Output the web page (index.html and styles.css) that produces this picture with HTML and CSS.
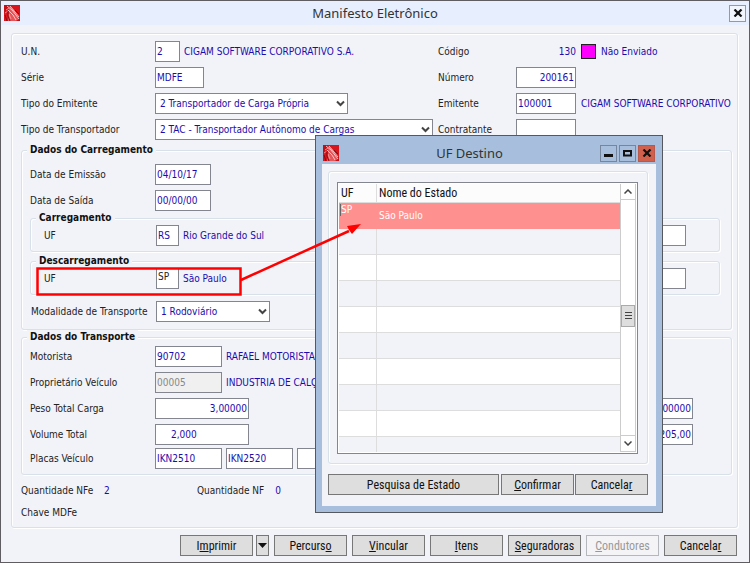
FILE: index.html
```html
<!DOCTYPE html>
<html lang="pt-BR">
<head>
    <meta charset="UTF-8" />
    <meta name="viewport" content="width=device-width, initial-scale=1" />
    <title>Manifesto Eletrônico</title>
    <link rel="stylesheet" href="styles.css">
</head>
<body>

    <svg class="sprite" aria-hidden="true">
        <symbol id="logo" viewBox="0 0 16 16">
            <rect width="16" height="16" fill="#d8141c" />
            <path d="M0 9L5 0H0zM16 11V16H12z" fill="#c01016" />
            <path d="M4 16L5 5L6 1L10 5L15 14L12 16z" fill="#e65458" />
            <path d="M3 1L8 5L15 14M6 1L11 7L15 12M4 5L9 10L12 15" stroke="#fbd0d0" stroke-width=".9" fill="none" />
            <path d="M2 5L5 3M1 8L4 6M5 9L7 14" stroke="#f4a8a8" stroke-width=".8" fill="none" />
            <path d="M4 6L4 11L6 16M1 10L3 16M11 5L15 9" stroke="#8e080e" stroke-width="1" fill="none" />
        </symbol>
        <symbol id="seta" viewBox="0 0 9 7">
            <path d="M1 1.5L4.5 5L8 1.5" stroke="#444" stroke-width="2" fill="none" />
        </symbol>
        <symbol id="fechar" viewBox="0 0 10 8">
            <path d="M1.5 .5L8.5 7.5M8.5 .5L1.5 7.5" stroke="#111" stroke-width="2.2" fill="none" />
        </symbol>
    </svg>

    <main class="janela">
        <header class="titulo">
            <svg class="logo"><use href="#logo" /></svg>
            <h1>Manifesto Eletrônico</h1>
            <button type="button" class="btn-janela" aria-label="Fechar"><svg width="10" height="8"><use href="#fechar" /></svg></button>
        </header>

        <form class="conteudo">
            <div class="painel">
                <div class="linhas">
                    <div class="linha dupla">
                        <label for="un">U.N.</label>
                        <div class="campo"><input id="un" class="w25" value="2"><span>CIGAM SOFTWARE CORPORATIVO S.A.</span></div>
                        <label for="codigo">Código</label>
                        <div class="campo"><output id="codigo" class="codigo">130</output><i class="status"></i><span>Não Enviado</span></div>
                    </div>
                    <div class="linha dupla">
                        <label for="serie">Série</label>
                        <div class="campo"><input id="serie" class="w49" value="MDFE"></div>
                        <label for="numero">Número</label>
                        <div class="campo"><input id="numero" class="w60 direita" value="200161"></div>
                    </div>
                    <div class="linha dupla">
                        <label for="tipo-emitente">Tipo do Emitente</label>
                        <div class="campo">
                            <span class="combo w193">
                                <select id="tipo-emitente"><option>2 Transportador de Carga Própria</option></select>
                                <svg><use href="#seta" /></svg>
                            </span>
                        </div>
                        <label for="emitente">Emitente</label>
                        <div class="campo"><input id="emitente" class="w60" value="100001"><span>CIGAM SOFTWARE CORPORATIVO</span></div>
                    </div>
                    <div class="linha dupla">
                        <label for="tipo-transportador">Tipo de Transportador</label>
                        <div class="campo">
                            <span class="combo w278">
                                <select id="tipo-transportador"><option>2 TAC - Transportador Autônomo de Cargas</option></select>
                                <svg><use href="#seta" /></svg>
                            </span>
                        </div>
                        <label for="contratante">Contratante</label>
                        <div class="campo"><input id="contratante" class="w60"></div>
                    </div>
                </div>

                <fieldset class="grupo">
                    <legend>Dados do Carregamento</legend>
                    <div class="linhas carga">
                        <div class="linha">
                            <label for="emissao">Data de Emissão</label>
                            <div class="campo"><input id="emissao" class="w56" value="04/10/17"></div>
                        </div>
                        <div class="linha">
                            <label for="saida">Data de Saída</label>
                            <div class="campo"><input id="saida" class="w56" value="00/00/00"></div>
                        </div>
                    </div>
                    <fieldset class="grupo interno">
                        <legend>Carregamento</legend>
                        <div class="linha">
                            <label for="uf-carga">UF</label>
                            <div class="campo"><input id="uf-carga" class="w23" value="RS"><span>Rio Grande do Sul</span><input class="w60 fim" aria-label="Local de carregamento"></div>
                        </div>
                    </fieldset>
                    <fieldset class="grupo interno">
                        <legend>Descarregamento</legend>
                        <div class="linha">
                            <label for="uf-descarga">UF</label>
                            <div class="campo"><input id="uf-descarga" class="w23 ativo" value="SP"><span>São Paulo</span><input class="w60 fim" aria-label="Local de descarregamento"></div>
                        </div>
                    </fieldset>
                    <div class="linha modalidade">
                        <label for="modalidade">Modalidade de Transporte</label>
                        <div class="campo">
                            <span class="combo w114">
                                <select id="modalidade"><option>1 Rodoviário</option></select>
                                <svg><use href="#seta" /></svg>
                            </span>
                        </div>
                    </div>
                </fieldset>

                <fieldset class="grupo transporte">
                    <legend>Dados do Transporte</legend>
                    <div class="linhas">
                        <div class="linha">
                            <label for="motorista">Motorista</label>
                            <div class="campo"><input id="motorista" class="w67" value="90702"><span>RAFAEL MOTORISTA</span></div>
                        </div>
                        <div class="linha">
                            <label for="proprietario">Proprietário Veículo</label>
                            <div class="campo"><input id="proprietario" class="w67" value="00005" disabled><span>INDUSTRIA DE CALÇADOS</span></div>
                        </div>
                        <div class="linha">
                            <label for="peso">Peso Total Carga</label>
                            <div class="campo"><input id="peso" class="w94 direita" value="3,00000"><input class="w94 direita fim" value="0,000000" aria-label="Peso"></div>
                        </div>
                        <div class="linha">
                            <label for="volume">Volume Total</label>
                            <div class="campo"><input id="volume" class="w94 volume" value="2,000"><input class="w94 direita fim" value="205,00" aria-label="Valor"></div>
                        </div>
                    </div>
                    <div class="linha placas">
                        <label for="placa1">Placas Veículo</label>
                        <div class="campo">
                            <input id="placa1" class="w67" value="IKN2510">
                            <input class="w67" value="IKN2520" aria-label="Placa 2">
                            <input class="w67" aria-label="Placa 3">
                        </div>
                    </div>
                </fieldset>

                <div class="resumo">
                    <p>Quantidade NFe <output>2</output></p>
                    <p>Quantidade NF <output>0</output></p>
                    <p>Chave MDFe</p>
                </div>
            </div>

            <div class="botoes">
                <div class="duplo">
                    <button type="button">I<u>m</u>primir</button>
                    <button type="button" class="menu" aria-label="Opções de impressão"><svg width="9" height="5" viewBox="0 0 9 5"><path d="M0 0H9L4.5 5z" fill="#111" /></svg></button>
                </div>
                <button type="button">Percurs<u>o</u></button>
                <button type="button"><u>V</u>incular</button>
                <button type="button"><u>I</u>tens</button>
                <button type="button"><u>S</u>eguradoras</button>
                <button type="button" disabled><u>C</u>ondutores</button>
                <button type="button">Cancela<u>r</u></button>
            </div>
        </form>
    </main>

    <section class="modal" role="dialog" aria-labelledby="titulo-modal">
        <header class="titulo">
            <svg class="logo"><use href="#logo" /></svg>
            <h2 id="titulo-modal">UF Destino</h2>
            <div class="controles">
                <button type="button" class="btn-janela" aria-label="Minimizar"><svg width="9" height="8"><path d="M0 6.5H9" stroke="#111" stroke-width="3" /></svg></button>
                <button type="button" class="btn-janela" aria-label="Maximizar"><svg width="9" height="8"><path d="M1 2H8V6.5H1z" stroke="#111" stroke-width="2" fill="none" /></svg></button>
                <button type="button" class="btn-janela sair" aria-label="Fechar"><svg width="10" height="8"><use href="#fechar" /></svg></button>
            </div>
        </header>
        <div class="corpo">
            <div class="moldura">
                <div class="lista">
                    <table>
                        <thead>
                            <tr><th>UF</th><th>Nome do Estado</th></tr>
                        </thead>
                        <tbody>
                            <tr class="selecionada"><td>SP</td><td>São Paulo</td></tr>
                            <tr><td></td><td></td></tr>
                            <tr><td></td><td></td></tr>
                            <tr><td></td><td></td></tr>
                            <tr><td></td><td></td></tr>
                            <tr><td></td><td></td></tr>
                            <tr><td></td><td></td></tr>
                            <tr><td></td><td></td></tr>
                            <tr><td></td><td></td></tr>
                            <tr class="parcial"><td></td><td></td></tr>
                        </tbody>
                    </table>
                    <div class="rolagem">
                        <button type="button" aria-label="Subir"><svg width="8" height="5" viewBox="0 0 8 5"><path d="M.5 4.5L4 1L7.5 4.5" stroke="#444" stroke-width="1.5" fill="none" /></svg></button>
                        <div class="trilho"><i class="polegar"></i></div>
                        <button type="button" aria-label="Descer"><svg width="8" height="5" viewBox="0 0 8 5"><path d="M.5 .5L4 4L7.5 .5" stroke="#444" stroke-width="1.5" fill="none" /></svg></button>
                    </div>
                </div>
            </div>
            <div class="acoes">
                <button type="button">Pesquisa de Estado</button>
                <button type="button"><u>C</u>onfirmar</button>
                <button type="button">Cancela<u>r</u></button>
            </div>
        </div>
    </section>

    <svg class="destaque" width="340" height="80" viewBox="0 0 340 80" aria-hidden="true">
        <rect x="8.5" y="48.5" width="203" height="26" fill="none" stroke="#f00" stroke-width="2.5" />
        <path d="M212 60L320 11" stroke="#f00" stroke-width="2.5" />
        <path d="M332 4L323 14L320 10L318 6z" fill="#f00" />
    </svg>

</body>
</html>
```

FILE: styles.css
```css
* {
    box-sizing: border-box;
    margin: 0;
    padding: 0;
}

body {
    position: relative;
    min-height: 100vh;
    font: 10px/14px "DejaVu Sans Condensed", "DejaVu Sans", Tahoma, sans-serif;
    background: #f2f3f9;
    color: #222;
}

.sprite {
    position: absolute;
    width: 0;
    height: 0;
}

.janela {
    min-height: 100vh;
    border: 1px solid #5f5d62;
}

/* Barra de título */
.titulo {
    display: grid;
    grid-template-columns: 52px 1fr 52px;
    align-items: center;
    height: 24px;
    padding: 0 3px;
    background: #e7effe;
}

    .titulo h1,
    .titulo h2 {
        font: 13px/20px "Noto Sans", "Open Sans", sans-serif;
        text-align: center;
        color: #333;
    }

.logo {
    width: 16px;
    height: 16px;
}

.btn-janela {
    display: flex;
    align-items: center;
    justify-content: center;
    justify-self: end;
    width: 17px;
    height: 17px;
    background: #f2f5fc;
    border: 1px solid #8d99b5;
}

/* Formulário */
.conteudo {
    padding: 8px 11px 6px 10px;
}

.painel,
.grupo,
.moldura {
    border: 1px solid #d8e0e8;
    border-radius: 3px;
    box-shadow: 1px 1px 0 #fff, inset 1px 1px 0 #fff;
}

.painel {
    padding: 7px 5px 7px 9px;
}

.linhas {
    display: grid;
    gap: 5px;
}

.linha {
    display: grid;
    grid-template-columns: 125px minmax(0, 1fr);
    align-items: center;
}

    .linha.dupla {
        grid-template-columns: 134px 283px 78px minmax(0, 1fr);
    }

.campo {
    display: flex;
    align-items: center;
    gap: 4px;
    height: 21px;
    overflow: hidden;
    white-space: nowrap;
    color: #1c0cae;
}

.dupla .campo:last-child {
    gap: 5px;
}

input,
select {
    flex: none;
    height: 21px;
    padding: 0 1px;
    font: inherit;
    color: #1c0cae;
    background: #fff;
    border: 1px solid #83868f;
    border-radius: 0;
    appearance: none;
}

    input:disabled {
        color: #888;
        background: #f0f0f0;
    }

.direita {
    text-align: right;
}

.ativo {
    padding-bottom: 4px;
    color: #222;
}

.volume {
    padding-left: 15px;
}

.fim {
    margin-left: auto;
}

.w23 { width: 23px; }
.w25 { width: 25px; }
.w49 { width: 49px; }
.w56 { width: 56px; }
.w60 { width: 60px; }
.w67 { width: 67px; }
.w94 { width: 94px; }
.w114 { width: 114px; }
.w193 { width: 193px; }
.w278 { width: 278px; }

.combo {
    display: grid;
    align-items: center;
}

    .combo select {
        grid-area: 1 / 1;
        width: 100%;
        padding-left: 4px;
    }

    .combo svg {
        grid-area: 1 / 1;
        justify-self: end;
        width: 9px;
        height: 7px;
        margin-right: 3px;
        pointer-events: none;
    }

.codigo {
    width: 60px;
    text-align: right;
}

.status {
    width: 15px;
    height: 15px;
    background: #f0f;
    border: 1px solid #222;
}

/* Grupos */
.grupo {
    min-width: 0;
    padding: 0 8px 7px;
}

    .grupo legend {
        margin-left: -3px;
        padding: 0 3px;
        height: 14px;
        font-weight: bold;
        color: #111;
        background: #f2f3f9;
    }

.painel > .linhas {
    padding-bottom: 3px;
}

.carga {
    padding-top: 7px;
}

.interno {
    margin: 0 3px 2px 0;
    padding-bottom: 5px;
}

    .interno .linha {
        grid-template-columns: 112px minmax(0, 1fr);
        padding: 0 25px 0 5px;
    }

.modalidade {
    padding: 4px 0 0 1px;
}

.transporte {
    padding-bottom: 5px;
}

    .transporte .linhas {
        padding-top: 2px;
    }

    .transporte .linhas .campo {
        padding-right: 30px;
    }

.placas {
    padding-top: 3px;
}

.resumo {
    display: grid;
    grid-template-columns: 176px 1fr;
    gap: 8px 0;
    padding-top: 9px;
}

    .resumo output {
        margin-left: 8px;
        color: #1c0cae;
    }

/* Botões */
.botoes {
    display: flex;
    justify-content: flex-end;
    gap: 5px;
    padding: 7px 1px 0 0;
}

    .botoes button,
    .acoes button {
        width: 73px;
        height: 21px;
        font: 12px/14px "Roboto Condensed", Roboto, sans-serif;
        color: #111;
        background: #dedede;
        border: 1px solid #777;
    }

    .botoes button:disabled {
        color: #999;
        background: #f4f4f6;
        border-color: #b4b8bc;
    }

    .botoes .menu {
        display: flex;
        align-items: center;
        justify-content: center;
        width: 13px;
    }

.duplo {
    display: flex;
    gap: 3px;
}

/* Janela sobreposta */
.modal {
    position: absolute;
    left: 315px;
    top: 135px;
    width: 348px;
    padding: 0 6px 6px;
    background: #a7bfdc;
    border: 1px solid #55585f;
}

    .modal .titulo {
        grid-template-columns: 16px 1fr 55px;
        height: 28px;
        padding: 6px 1px 0;
        background: none;
    }

.controles {
    display: flex;
    gap: 2px;
}

    .controles .btn-janela {
        background: #a7bfdc;
        border-color: #76869f;
    }

    .controles .sair {
        background: #d0604c;
        border-color: #b8584a;
    }

.corpo {
    padding: 7px 8px 11px 6px;
    background: #f2f3f9;
}

.moldura {
    padding: 10px 9px 9px 8px;
}

.lista {
    display: flex;
    background: #fff;
    border: 1px solid #83868f;
    padding: 1px;
}

    .lista table {
        flex: 1;
        border-collapse: separate;
        border-spacing: 0;
        table-layout: fixed;
    }

    .lista th {
        height: 19px;
        padding-left: 2px;
        font: 12px/14px "Roboto Condensed", Roboto, sans-serif;
        text-align: left;
        color: #111;
        background: #fcfcfc;
        border-bottom: 1px solid #ddd;
    }

    .lista th:first-child {
        width: 38px;
    }

    .lista td {
        height: 26px;
        padding-left: 2px;
        border-bottom: 1px solid #ddd;
    }

    .lista th:first-child,
    .lista td:first-child {
        border-right: 1px solid #ddd;
    }

    .lista tbody tr:nth-child(even) {
        background: #f2f3f9;
    }

    .lista .selecionada td {
        color: #fff;
        background: #ff9090;
        border-color: #ff9090;
    }

    .lista .selecionada td:first-child {
        vertical-align: top;
        background: linear-gradient(#666, #666) 1px 1px / 1px 12px no-repeat, #ff9090;
    }

    .lista .parcial td {
        height: 15px;
        border-bottom: 0;
    }

.rolagem {
    display: flex;
    flex-direction: column;
    width: 16px;
    border: 1px solid #ccc;
    border-top: 0;
}

    .rolagem button {
        display: flex;
        align-items: center;
        justify-content: center;
        height: 16px;
        background: #fff;
        border: 0;
        border-bottom: 1px solid #ccc;
    }

    .rolagem button:last-child {
        border-top: 1px solid #ccc;
        border-bottom: 0;
    }

.trilho {
    flex: 1;
    padding-top: 105px;
}

.polegar {
    display: block;
    height: 22px;
    background: linear-gradient(#444, #444) center 6px / 7px 1px no-repeat,
        linear-gradient(#444, #444) center 9px / 7px 1px no-repeat,
        linear-gradient(#444, #444) center 12px / 7px 1px no-repeat,
        #dedede;
    border: 1px solid #aaa;
}

.acoes {
    display: grid;
    grid-template-columns: 1fr 73px 73px;
    gap: 1px;
    padding-top: 10px;
}

    .acoes button:first-child {
        width: auto;
        margin-right: 1px;
    }

.destaque {
    position: absolute;
    left: 29px;
    top: 220px;
    pointer-events: none;
}
```
